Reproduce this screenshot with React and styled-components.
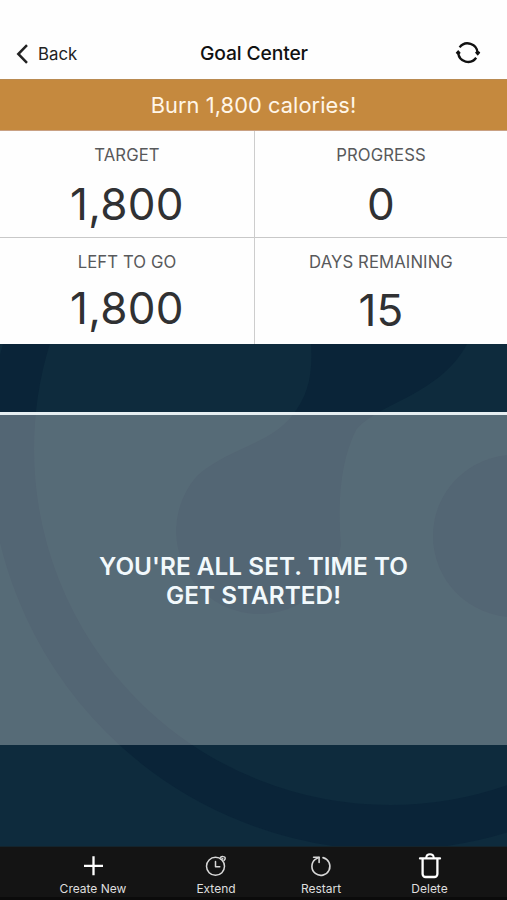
import React from "react";
import styled, { createGlobalStyle } from "styled-components";

const GlobalStyle = createGlobalStyle`
  * { box-sizing: border-box; }
  body {
    margin: 0;
    background: #fff;
    font-family: Inter, "Liberation Sans", sans-serif;
  }
`;

const Screen = styled.div`
  display: flex;
  flex-direction: column;
  width: 507px;
  height: 900px;
  overflow: hidden;
  background: #fefefe;
`;

const Header = styled.header`
  display: grid;
  grid-template-columns: 1fr auto 1fr;
  align-items: center;
  height: 79px;
  padding: 27px 26px 0 16px;
  color: #111;
`;

const BackButton = styled.button`
  display: flex;
  align-items: center;
  gap: 9px;
  padding: 1px 0 0;
  border: 0;
  background: none;
  color: #222;
  font: 400 16.8px/20px Inter, sans-serif;
`;

const Title = styled.h1`
  margin: 0;
  padding-left: 11px;
  font-size: 19.3px;
  line-height: 24px;
  font-weight: 500;
  letter-spacing: -0.15px;
`;

const SyncButton = styled.button`
  display: flex;
  justify-self: end;
  padding: 0;
  border: 0;
  background: none;
  color: #111;
`;

const Banner = styled.div`
  flex: none;
  height: 52px;
  border-top: 1px solid #b98a51;
  border-bottom: 1px solid #c9a184;
  background: #c5893e;
  color: #fff6e8;
  font-size: 21.8px;
  line-height: 50px;
  letter-spacing: 0.08px;
  text-align: center;
`;

const Stats = styled.section`
  flex: none;
  display: grid;
  grid-template-columns: 255px 252px;
  grid-template-rows: 107px 106px;
  background: #fefefe;
`;

const Stat = styled.div`
  display: flex;
  flex-direction: column;
  align-items: center;
  padding-top: 14px;
  border-right: ${(p) => (p.$left ? "1px solid #cdcdcd" : "0")};
  border-bottom: ${(p) => (p.$top ? "1px solid #c8c8c8" : "0")};
`;

const StatLabel = styled.div`
  color: #58595b;
  font-size: 16.7px;
  line-height: 20px;
  letter-spacing: 0.1px;
`;

const StatValue = styled.div`
  margin-top: ${(p) => p.$gap}px;
  color: #303133;
  font-size: 44px;
  line-height: 50px;
  font-weight: 400;
  letter-spacing: 0.3px;
`;

const Stage = styled.main`
  position: relative;
  flex: none;
  display: flex;
  flex-direction: column;
  height: 502px;
  padding-top: 68px;
  background: #0e2b3d;
`;

const Watermark = styled.svg`
  position: absolute;
  inset: 0;
`;

const MessagePanel = styled.div`
  position: relative;
  display: flex;
  align-items: center;
  justify-content: center;
  height: 333px;
  border-top: 3px solid #e6eef1;
  background: rgba(255, 255, 255, 0.302);
  background-clip: padding-box;
`;

const Message = styled.p`
  width: 340px;
  margin: 0;
  padding-top: 1px;
  color: #f2f9fc;
  font-size: 24.3px;
  line-height: 29px;
  font-weight: 600;
  letter-spacing: 0.05px;
  text-align: center;
`;

const Toolbar = styled.nav`
  flex: 1;
  display: flex;
  padding-left: 31px;
  border-top: 1px solid #13242d;
  background: #141414;
  border-bottom: 3px solid #0b0b0b;
`;

const Tool = styled.button`
  display: flex;
  flex-direction: column;
  align-items: center;
  width: ${(p) => p.$width}px;
  padding: 6px 0 0;
  border: 0;
  background: none;
  color: ${(p) => (p.$bright ? "#fff" : "#d8d8d8")};
`;

const ToolLabel = styled.span`
  margin-top: 2px;
  color: #dedede;
  font: 400 12px/15px Inter, sans-serif;
  white-space: nowrap;
`;

const iconProps = {
  fill: "none",
  stroke: "currentColor",
  strokeLinecap: "round",
  strokeLinejoin: "round",
};

const BackIcon = () => (
  <svg width="13" height="20" viewBox="0 0 13 20" {...iconProps} strokeLinecap="butt" strokeLinejoin="miter" strokeWidth="2.5">
    <path d="M11 1.2 2.3 10 11 18.8" />
  </svg>
);

const SyncIcon = () => (
  <svg width="26" height="24" viewBox="0 0 26 24" {...iconProps} strokeLinecap="butt" strokeWidth="2.3">
    <path d="M4.6 6.4A10 10 0 0 1 22.6 12M21.2 16.8A10 10 0 0 1 3.2 12" />
    <path d="M1.4 11.8 3.2 9.8 5 11.8 3.3 13.2ZM20.8 11.6 22.7 13.8 24.6 11.6 22.8 10.4Z" fill="currentColor" strokeWidth="1.2" />
  </svg>
);

const PlusIcon = () => (
  <svg width="26" height="26" viewBox="0 0 26 26" {...iconProps} strokeLinecap="butt" strokeWidth="2.3">
    <path d="M13.5 3.3v19M4 12.8h19" />
  </svg>
);

const ExtendIcon = () => (
  <svg width="26" height="26" viewBox="0 0 26 26" {...iconProps} strokeWidth="1.5">
    <circle cx="12.5" cy="13.3" r="9" />
    <path d="M12.5 8.5v5.2h4.3" />
    <path d="M17.5 4.4c1-1 4.5-1.2 4.7.4.2 1.1-.5 2-1.2 2.8M18.2 6.4l1.6-.7" />
  </svg>
);

const RestartIcon = () => (
  <svg width="26" height="26" viewBox="0 0 26 26" {...iconProps} strokeWidth="1.6">
    <path d="M15 4.6A9 9 0 1 1 7.2 6.4L11 4.4" />
    <path d="M5.6 4.2h5.5v5.2" />
  </svg>
);

const TrashIcon = () => (
  <svg width="26" height="26" viewBox="0 0 26 26" {...iconProps} strokeWidth="2.3">
    <path d="M3 5.4h20" />
    <path d="M9.2 4.8c.2-2.6 1.4-3.5 3.8-3.5s3.6.9 3.8 3.5" strokeWidth="2" />
    <path d="M5.6 6.5V21a3 3 0 0 0 3 3h8.8a3 3 0 0 0 3-3V6.5" />
  </svg>
);

const stats = [
  { label: "TARGET", value: "1,800", gap: 14, left: true, top: true },
  { label: "PROGRESS", value: "0", gap: 14, top: true },
  { label: "LEFT TO GO", value: "1,800", gap: 11, left: true },
  { label: "DAYS REMAINING", value: "15", gap: 13 },
];

const tools = [
  { label: "Create New", Icon: PlusIcon, width: 124, bright: true },
  { label: "Extend", Icon: ExtendIcon, width: 122 },
  { label: "Restart", Icon: RestartIcon, width: 88 },
  { label: "Delete", Icon: TrashIcon, width: 129, bright: true },
];

export default function App() {
  return (
    <Screen>
      <GlobalStyle />
      <Header>
        <BackButton><BackIcon />Back</BackButton>
        <Title>Goal Center</Title>
        <SyncButton aria-label="Sync"><SyncIcon /></SyncButton>
      </Header>
      <Banner>Burn 1,800 calories!</Banner>
      <Stats>
        {stats.map((s) => (
          <Stat key={s.label} $left={s.left} $top={s.top}>
            <StatLabel>{s.label}</StatLabel>
            <StatValue $gap={s.gap}>{s.value}</StatValue>
          </Stat>
        ))}
      </Stats>
      <Stage>
        <Watermark width="507" height="502" viewBox="0 344 507 502">
          <circle cx="390" cy="449" r="378.5" fill="none" stroke="#0a2438" strokeWidth="45" />
          <path
            fill="#0a2438"
            d="M311 344C313 375 308 396 292 416C270 444 225 450 197 476A83 83 0 1 0 341 545C337 500 341 460 356 430C378 403 440 395 467 344Z"
          />
          <circle cx="514" cy="536" r="81" fill="#0a2438" />
        </Watermark>
        <MessagePanel>
          <Message>YOU'RE ALL SET. TIME TO GET STARTED!</Message>
        </MessagePanel>
      </Stage>
      <Toolbar>
        {tools.map(({ label, Icon, width, bright }) => (
          <Tool key={label} $width={width} $bright={bright}>
            <Icon />
            <ToolLabel>{label}</ToolLabel>
          </Tool>
        ))}
      </Toolbar>
    </Screen>
  );
}
